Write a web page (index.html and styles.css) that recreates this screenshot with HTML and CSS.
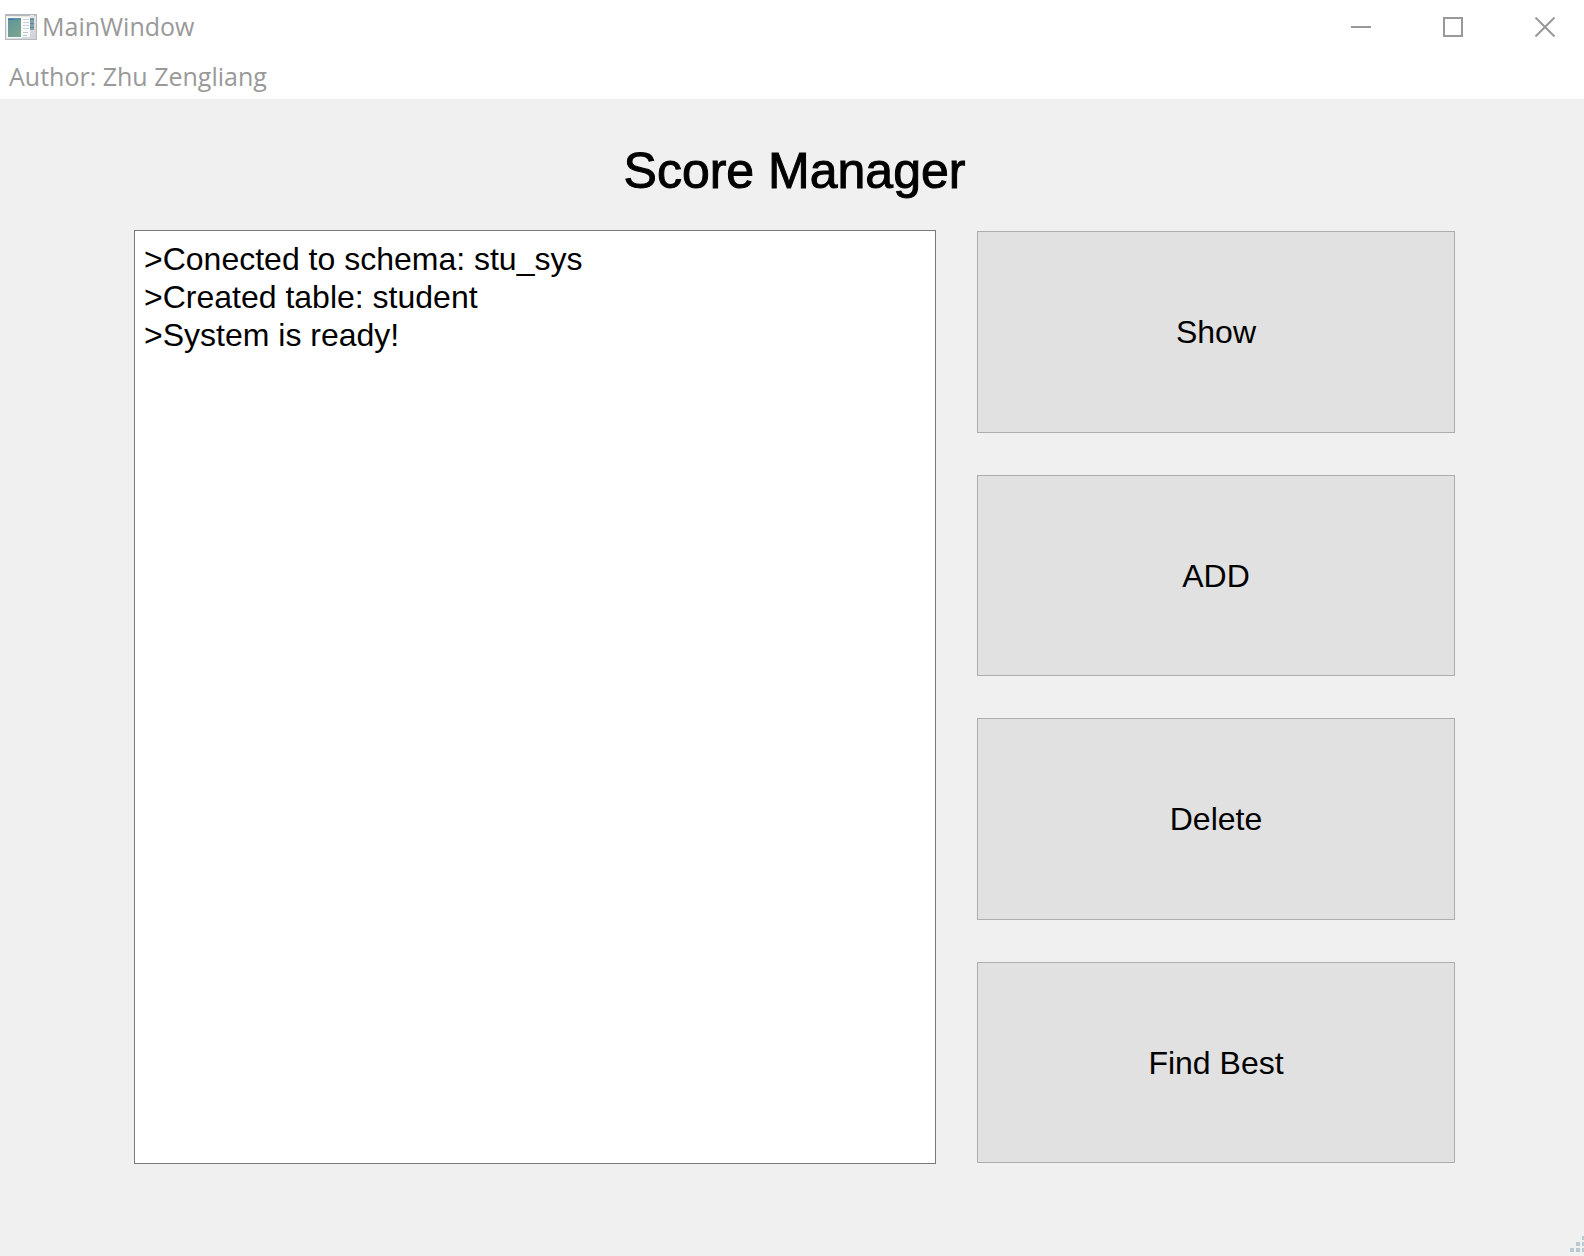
FILE: index.html
```html
<!DOCTYPE html>
<html lang="en">
<head>
<meta charset="utf-8">
<title>MainWindow</title>
<link rel="stylesheet" href="styles.css">
</head>
<body>
<div class="window">
  <header class="titlebar">
    <svg class="app-icon" width="32" height="26" viewBox="0 0 32 26" aria-hidden="true">
      <defs>
        <linearGradient id="pane" x1="0" y1="0" x2="0.6" y2="1">
          <stop offset="0" stop-color="#5f9299"/>
          <stop offset="1" stop-color="#78a490"/>
        </linearGradient>
        <linearGradient id="frame" x1="0" y1="0" x2="1" y2="1">
          <stop offset="0" stop-color="#f2f3f4"/>
          <stop offset="1" stop-color="#cfd2d4"/>
        </linearGradient>
      </defs>
      <rect x="0.5" y="0.5" width="31" height="25" fill="url(#frame)" stroke="#b7babd"/>
      <rect x="1" y="0" width="30" height="2" fill="#b4b8bc"/>
      <rect x="25" y="1" width="4" height="1" fill="#e8eaec"/>
      <rect x="2" y="3" width="15" height="21" fill="#f6f8f8"/>
      <rect x="3" y="4" width="13" height="19" fill="url(#pane)"/>
      <path d="M3 5.500h6" stroke="#3b73b8"/>
      <path d="M9 5.500h7" stroke="#5389a6"/>
      <rect x="17" y="3" width="8" height="20" fill="#f8f9fa"/>
      <path d="M18 5.500h6M18 8.500h6M18 11.500h6M18 14.500h6" stroke="#d3d6d9"/>
      <path d="M18 18.500h5M18 21.500h4" stroke="#b5cdc9"/>
      <rect x="25" y="4" width="4" height="12" fill="#7fa5a6"/>
      <path d="M25 5.500h4M25 9.500h4M25 13.500h4" stroke="#5d87a8"/>
    </svg>
    <span class="title">MainWindow</span>
    <div class="controls">
      <button class="control" type="button" aria-label="Minimize">
        <svg width="20" height="20" viewBox="0 0 20 20"><path d="M0 10h20"/></svg>
      </button>
      <button class="control" type="button" aria-label="Maximize">
        <svg width="20" height="20" viewBox="0 0 20 20"><path d="M1 1h18v18H1z"/></svg>
      </button>
      <button class="control" type="button" aria-label="Close">
        <svg width="20" height="20" viewBox="0 0 20 20"><path d="M0.500 0.500l19 19M19.500 0.500l-19 19"/></svg>
      </button>
    </div>
  </header>
  <div class="menubar">Author: Zhu Zengliang</div>
  <main class="content">
    <h1 class="heading">Score Manager</h1>
    <div class="panels">
      <textarea class="log" aria-label="Log" readonly>&gt;Conected to schema: stu_sys
&gt;Created table: student
&gt;System is ready!</textarea>
      <div class="actions">
        <button class="action" type="button">Show</button>
        <button class="action" type="button">ADD</button>
        <button class="action" type="button">Delete</button>
        <button class="action" type="button">Find Best</button>
      </div>
    </div>
  </main>
  <footer class="statusbar">
    <svg width="14" height="16" viewBox="0 0 14 16" fill="#b9c9d2" aria-hidden="true">
      <path d="M12 0h2v4h-2zM6 6h4v4H6zM12 6h2v4h-2zM0 12h4v4H0zM6 12h4v4H6zM12 12h2v4h-2z"/>
    </svg>
  </footer>
</div>
</body>
</html>
```
FILE: styles.css
```css
* {
  box-sizing: border-box;
}

body {
  margin: 0;
  background: #f0f0f0;
  color: #000;
  font-family: "Liberation Sans", Arial, sans-serif;
}

button,
textarea {
  font: inherit;
  color: inherit;
  border-radius: 0;
}

.window {
  display: flex;
  flex-direction: column;
  min-height: 100vh;
}

.titlebar,
.menubar {
  display: flex;
  align-items: center;
  background: #fff;
  color: #999;
  font-family: "Open Sans", "Noto Sans", sans-serif;
  font-size: 25px;
}

.titlebar {
  height: 54px;
  padding-left: 5px;
}

.title {
  margin-left: 5px;
  padding-bottom: 2px;
}

.controls {
  display: flex;
  align-self: stretch;
  gap: 14px;
  margin-left: auto;
}

.control {
  display: flex;
  align-items: center;
  justify-content: center;
  width: 78px;
  padding: 0;
  border: 0;
  background: none;
}

.control svg {
  fill: none;
  stroke: #999;
  stroke-width: 2;
}

.menubar {
  height: 45px;
  padding: 0 9px 2px;
}

.content {
  display: flex;
  flex: 1;
  flex-direction: column;
  padding: 40px 129px 0 134px;
}

.heading {
  margin: 0 0 27px;
  font-size: 50px;
  font-weight: 400;
  line-height: 64px;
  text-align: center;
  -webkit-text-stroke: 1px #000;
}

.panels {
  display: grid;
  flex: 1;
  grid-template-columns: 802fr 478fr;
  gap: 41px;
}

.log {
  display: block;
  width: 100%;
  height: 100%;
  margin: 0;
  padding: 9px;
  border: 1px solid #7a7a7a;
  outline: 0;
  background: #fff;
  font-size: 32px;
  line-height: 38px;
  resize: none;
}

.actions {
  display: grid;
  grid-auto-rows: 1fr;
  gap: 42px;
  padding: 1px 0;
}

.action {
  padding: 2px 0 0;
  border: 1px solid #adadad;
  background: #e1e1e1;
  font-size: 32px;
}

.statusbar {
  display: flex;
  align-items: flex-end;
  justify-content: flex-end;
  height: 92px;
  padding-bottom: 4px;
}
```
